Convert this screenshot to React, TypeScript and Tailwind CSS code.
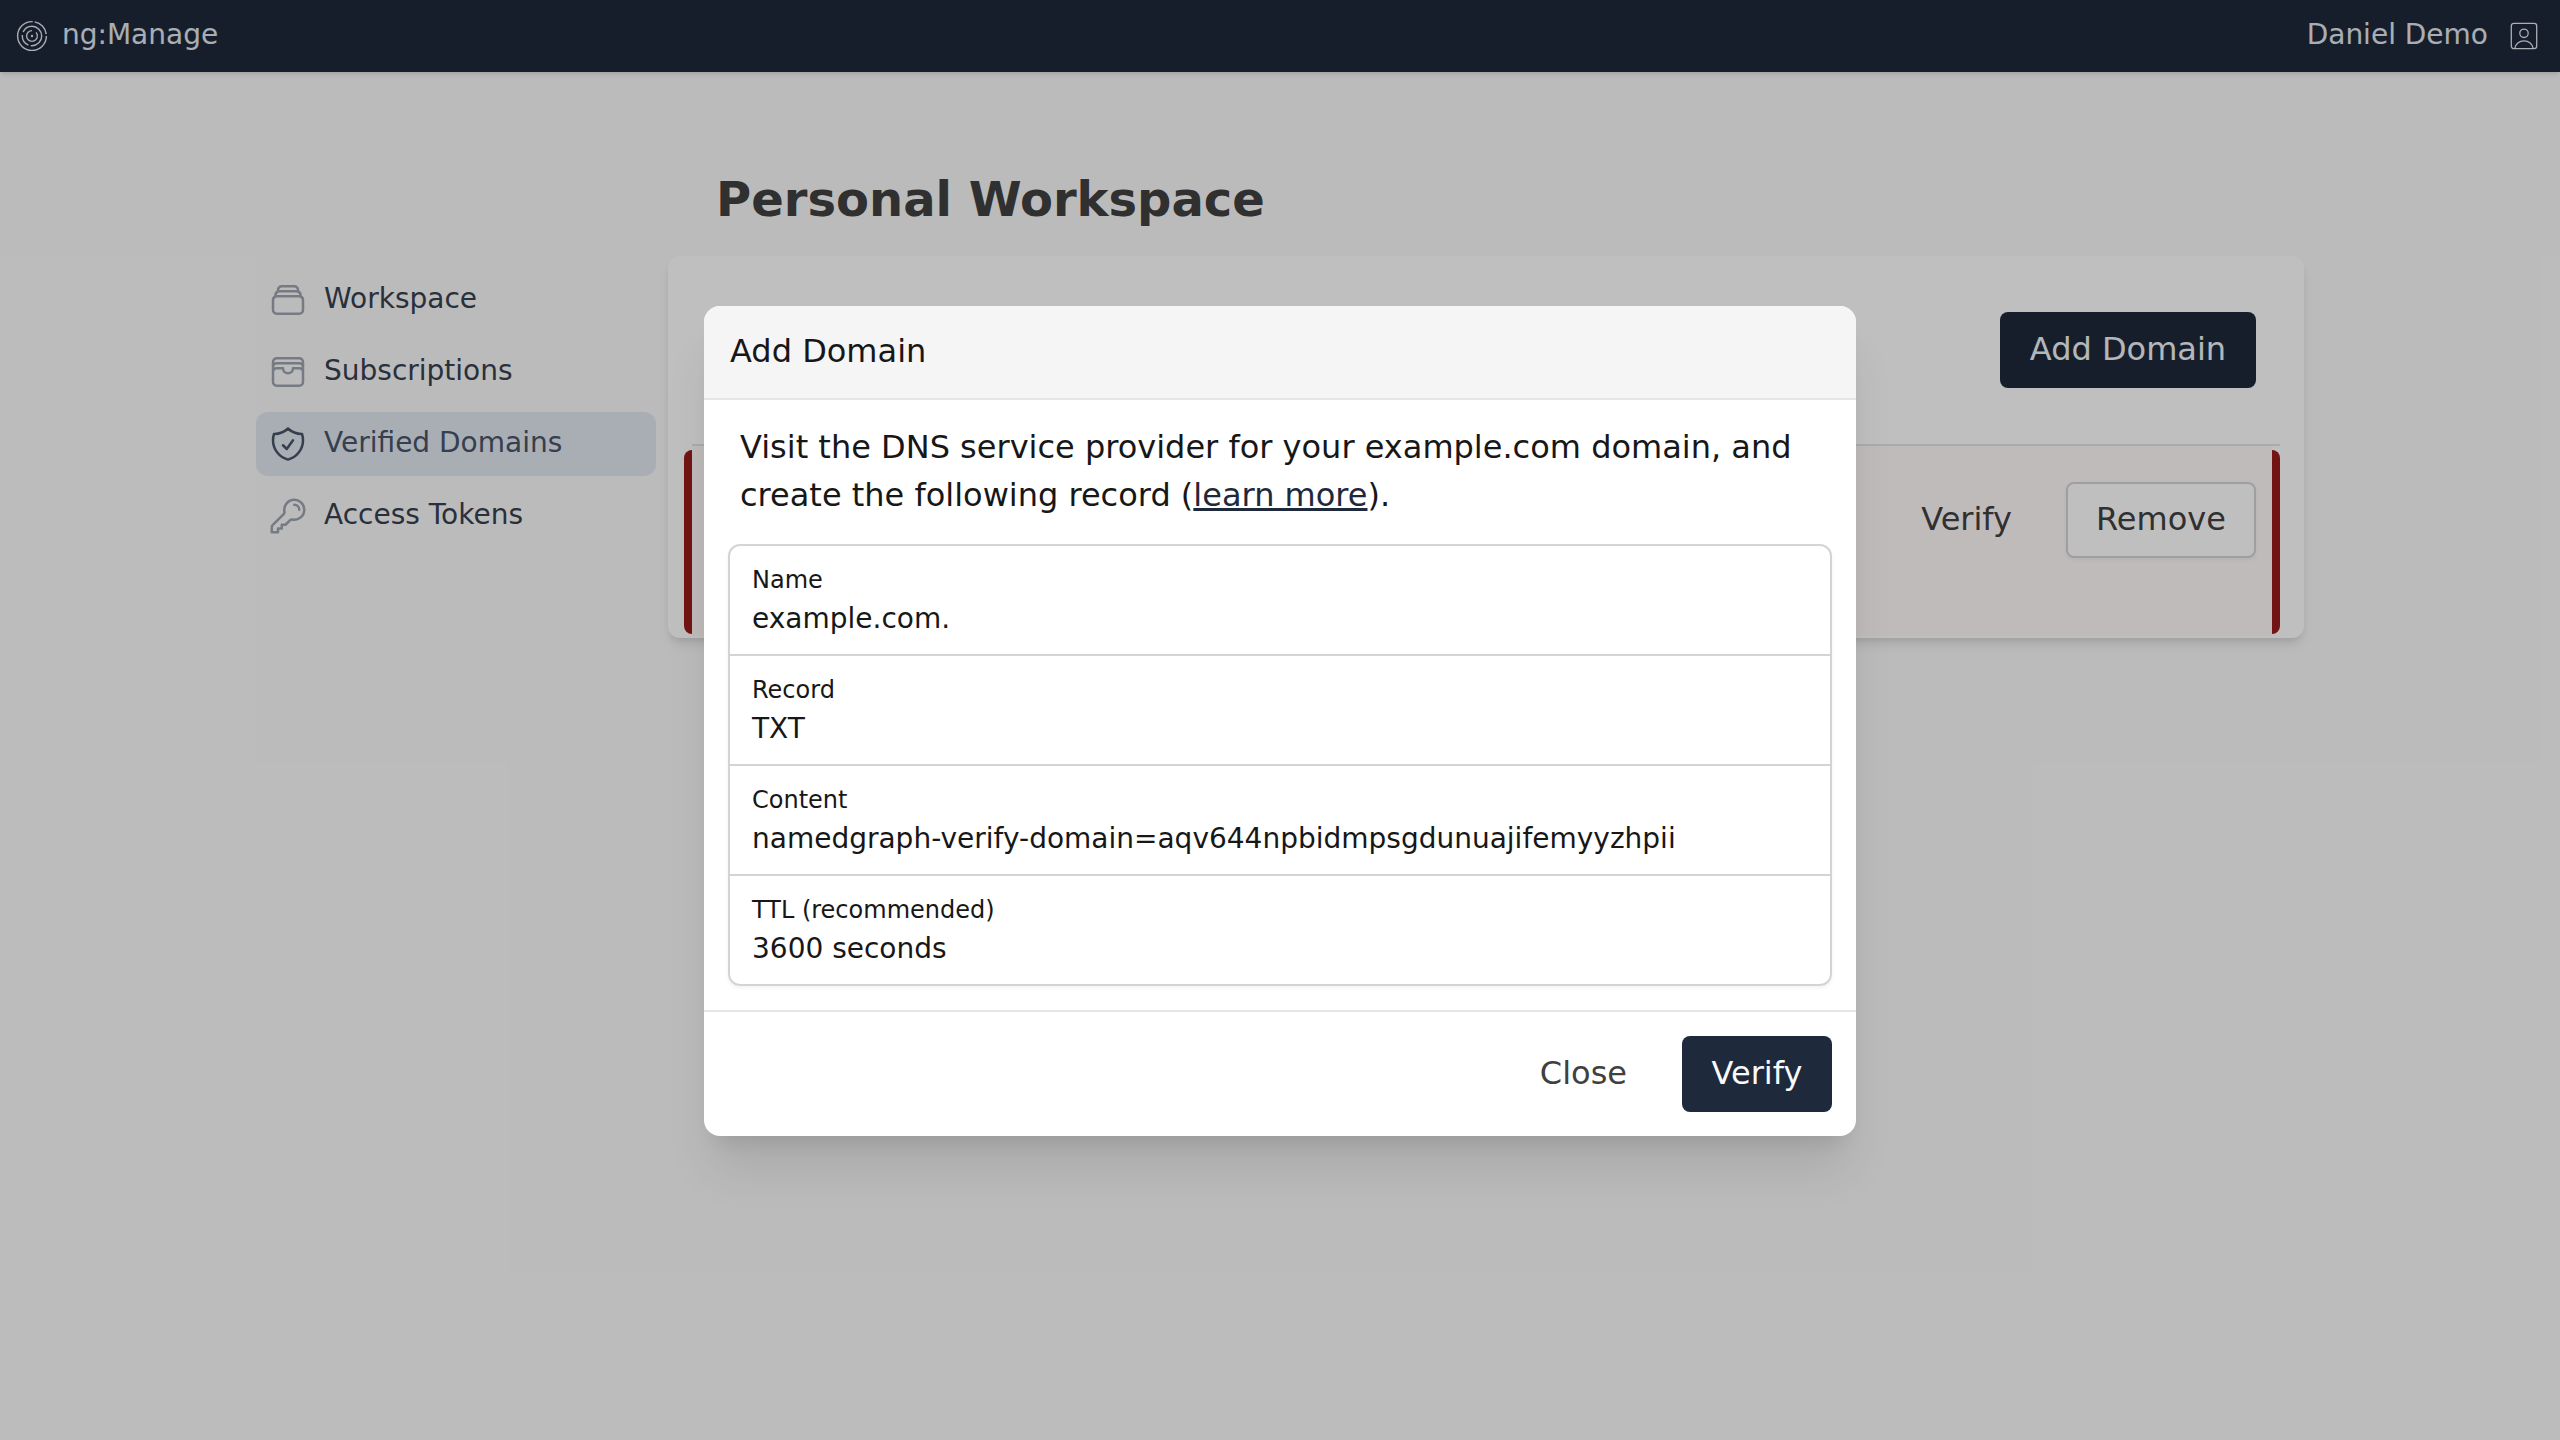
import {
  HiOutlineKey,
  HiOutlineRectangleStack,
  HiOutlineShieldCheck,
  HiOutlineWallet,
} from "react-icons/hi2";

const nav = [
  { name: "Workspace", icon: HiOutlineRectangleStack },
  { name: "Subscriptions", icon: HiOutlineWallet },
  { name: "Verified Domains", icon: HiOutlineShieldCheck, active: true },
  { name: "Access Tokens", icon: HiOutlineKey },
];

const records = [
  { label: "Name", value: "example.com." },
  { label: "Record", value: "TXT" },
  { label: "Content", value: "namedgraph-verify-domain=aqv644npbidmpsgdunuajifemyyzhpii" },
  { label: "TTL (recommended)", value: "3600 seconds" },
];

// three broken rings around a dot
function Logo() {
  return (
    <svg viewBox="0 0 32 32" className="size-8" fill="none" stroke="currentColor" strokeWidth="1.4">
      <circle cx="16" cy="16" r="14.4" pathLength="360" strokeDasharray="273 8 71 8" />
      <circle cx="16" cy="16" r="9.7" pathLength="360" strokeDasharray="98 14 74 18 156 0" />
      <circle cx="16" cy="16" r="5.4" pathLength="360" strokeDasharray="270 48 42 0" />
      <circle cx="16" cy="16" r="1.2" fill="currentColor" stroke="none" />
    </svg>
  );
}

function UserIcon() {
  return (
    <svg viewBox="0 0 32 32" className="size-8" fill="none" stroke="currentColor" strokeWidth="1.3">
      <rect x="3.3" y="3.3" width="25.4" height="25.4" rx="2.6" />
      <circle cx="16" cy="13.3" r="4.2" />
      <path d="M6.8 28.6c.6-4.6 4.4-7.8 9.2-7.8s8.6 3.200 9.200 7.800" />
    </svg>
  );
}

export default function App() {
  return (
    <div className="relative h-[1440px] w-[2560px] overflow-hidden bg-[#fafafa] font-['DejaVu_Sans',sans-serif] text-neutral-900">
      <header className="flex h-[72px] items-center justify-between bg-[#1e293b] pr-5 pl-4 text-[28px] leading-10 text-[#e2e8f0] shadow-[0_2px_6px_rgb(0_0_0/0.1),0_2px_4px_-2px_rgb(0_0_0/0.1)]">
        <div className="flex items-center gap-[14px]">
          <Logo />
          <span className="-mt-0.5">ng:Manage</span>
        </div>
        <div className="flex items-center gap-5">
          <span className="-mt-0.5">Daniel Demo</span>
          <UserIcon />
        </div>
      </header>

      <main className="mx-auto flex w-[2048px] gap-3">
        <nav className="mt-[196px] flex w-[400px] shrink-0 flex-col gap-2 pb-4">
          {nav.map((item) => (
            <a
              key={item.name}
              className={
                item.active
                  ? "flex h-16 items-center gap-4 rounded-xl bg-[#e2e8f0] px-3 text-[28px] text-[#475569]"
                  : "flex h-16 items-center gap-4 rounded-xl px-3 text-[28px] text-[#374151]"
              }
            >
              <item.icon className={item.active ? "size-10 text-[#475569]" : "size-10 text-[#9ca3af]"} />
              <span className="-mt-0.5">{item.name}</span>
            </a>
          ))}
        </nav>

        <section className="flex-1 pt-[95px]">
          <h1 className="h-[89px] pl-12 text-5xl leading-[64px] font-bold text-neutral-700">Personal Workspace</h1>
          <div className="h-[382px] rounded-xl bg-white shadow-[0_8px_12px_-2px_rgb(0_0_0/0.1),0_4px_8px_-4px_rgb(0_0_0/0.1)]">
            <div className="mx-6 flex h-[190px] items-start justify-end border-b-2 border-neutral-200 pt-14 pr-6">
              <button className="h-[76px] w-[256px] rounded-lg bg-[#1e293b] pb-0.5 text-[32px] text-[#f1f5f9]">
                Add Domain
              </button>
            </div>
            <div className="mr-6 ml-4 flex h-[190px]">
              <div className="mt-1 h-[184px] w-2 rounded-l-lg bg-[#991b1b]" />
              <div className="flex flex-1 items-start justify-end gap-[54px] bg-[#fffafa] pt-9 pr-4">
                <button className="h-[76px] pb-0.5 text-[32px] text-neutral-700">Verify</button>
                <button className="h-[76px] w-[190px] rounded-lg border-2 border-neutral-300 bg-white pb-0.5 text-[32px] text-neutral-700 shadow-[0_2px_4px_rgb(0_0_0/0.05)]">
                  Remove
                </button>
              </div>
              <div className="mt-1 h-[184px] w-2 rounded-r-lg bg-[#991b1b]" />
            </div>
          </div>
        </section>
      </main>

      <div className="absolute inset-0 bg-black/25">
        <div className="mx-auto mt-[306px] h-[830px] w-[1152px] overflow-hidden rounded-2xl bg-white shadow-[0_40px_50px_-10px_rgb(0_0_0/0.1),0_16px_20px_-12px_rgb(0_0_0/0.1)]">
          <div className="h-[94px] border-b-2 border-neutral-200 bg-neutral-100 px-[26px] pt-[21px] text-[32px] leading-[48px]">
            Add Domain
          </div>
          <div className="h-[610px] px-6 pt-[23px]">
            <p className="px-3 text-[32px] leading-[48px]">
              Visit the DNS service provider for your example.com domain, and create the following record (
              <a className="text-[#1e293b] underline">learn more</a>).
            </p>
            <dl className="mt-[25px] divide-y-2 divide-neutral-300 rounded-xl border-2 border-neutral-300 shadow-[0_2px_4px_rgb(0_0_0/0.05)]">
              {records.map((r) => (
                <div key={r.label} className="h-[110px] px-[22px] pt-4 last:h-[108px]">
                  <dt className="text-2xl leading-9">{r.label}</dt>
                  <dd className="text-[28px] leading-[42px]">{r.value}</dd>
                </div>
              ))}
            </dl>
          </div>
          <div className="flex h-[126px] items-start justify-end gap-[55px] border-t-2 border-neutral-200 px-6 pt-6 text-[32px]">
            <button className="h-[76px] pb-0.5 text-neutral-700">Close</button>
            <button className="h-[76px] w-[150px] rounded-lg bg-[#1e293b] pb-0.5 text-[#f8fafc]">Verify</button>
          </div>
        </div>
      </div>
    </div>
  );
}
